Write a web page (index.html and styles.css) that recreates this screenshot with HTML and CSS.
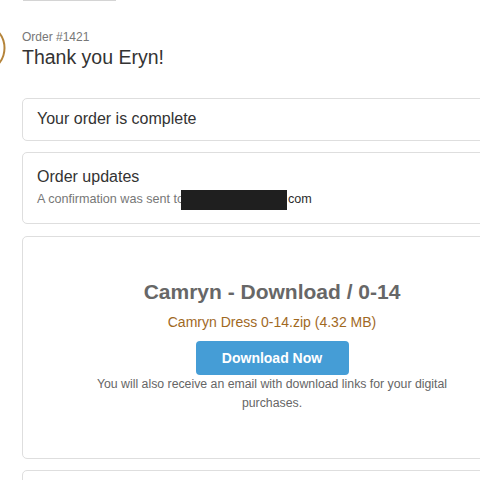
FILE: index.html
```html
<!DOCTYPE html>
<html lang="en">
<head>
    <meta charset="UTF-8">
    <meta name="viewport" content="width=device-width, initial-scale=1.0">
    <title>Thank you</title>
    <link rel="stylesheet" href="styles.css">
</head>
<body>
    <div class="page">
        <div class="logo-rule"></div>

        <div class="header">
            <svg class="check" width="52" height="52" viewBox="0 0 52 52">
                <circle cx="26" cy="26" r="24.5" fill="none" stroke="#b5843a" stroke-width="2"/>
            </svg>
            <div class="header-text">
                <div class="order-no">Order #1421</div>
                <div class="thanks">Thank you Eryn!</div>
            </div>
        </div>

        <div class="card card-status">Your order is complete</div>

        <div class="card card-updates">
            <div class="card-title">Order updates</div>
            <div class="confirm">A confirmation was sent to<span class="redacted"></span><span class="domain">com</span></div>
        </div>

        <div class="card card-download">
            <div class="dl-title">Camryn - Download / 0-14</div>
            <div class="dl-file">Camryn Dress 0-14.zip (4.32 MB)</div>
            <a class="dl-button" href="#">Download Now</a>
            <p class="dl-note">You will also receive an email with download links for your digital purchases.</p>
        </div>

        <div class="card card-next"></div>
    </div>
</body>
</html>
```

FILE: styles.css
```css
body{
    margin: 0;
    background: #fff;
    font-family: "Liberation Sans", Arial, sans-serif;
    color: #333;
    overflow: hidden;
}
.page{
    width: 500px;
    margin-left: 22px;
}
.logo-rule{
    width: 93px;
    margin-left: 1px;
    border-bottom: 1px solid #d4d4d4;
}
.header{
    display: flex;
    align-items: center;
    margin-top: 29px;
}
.check{
    flex: none;
    margin: -9px 16px -7px -68px;
}
.order-no{
    font-size: 12px;
    line-height: 14px;
    color: #777;
}
.thanks{
    font-size: 19.5px;
    line-height: 22px;
    margin-top: 2px;
    color: #333;
}
.card{
    border: 1px solid #dedede;
    border-radius: 5px;
    margin-bottom: 11px;
}
.card-status{
    margin-top: 30px;
    padding: 11px 14px 12px;
    font-size: 16px;
    line-height: 18px;
}
.card-updates{
    padding: 15px 14px 13px;
}
.card-title{
    font-size: 16px;
    line-height: 18px;
}
.confirm{
    margin-top: 3px;
    font-size: 12.6px;
    line-height: 20px;
    color: #777;
}
.redacted{
    display: inline-block;
    width: 106px;
    height: 20px;
    margin-left: -3px;
    vertical-align: middle;
    background: #1f1f1f;
}
.domain{
    color: #2b2b2b;
    margin-left: 1px;
}
.card-download{
    margin-top: 12px;
    padding: 43px 20px 45px;
    text-align: center;
}
.dl-title{
    font-size: 21px;
    line-height: 24px;
    font-weight: bold;
    color: #676767;
}
.dl-file{
    margin-top: 9px;
    font-size: 14px;
    line-height: 18px;
    color: #a1691f;
}
.dl-button{
    display: inline-block;
    margin-top: 10px;
    width: 153px;
    height: 34px;
    line-height: 34px;
    border-radius: 4px;
    background: #459dd6;
    color: #fff;
    font-size: 14px;
    font-weight: bold;
    text-decoration: none;
}
.dl-note{
    max-width: 380px;
    margin: 0 auto;
    font-size: 12.3px;
    line-height: 19px;
    color: #666;
}
.card-next{
    height: 60px;
}
```
